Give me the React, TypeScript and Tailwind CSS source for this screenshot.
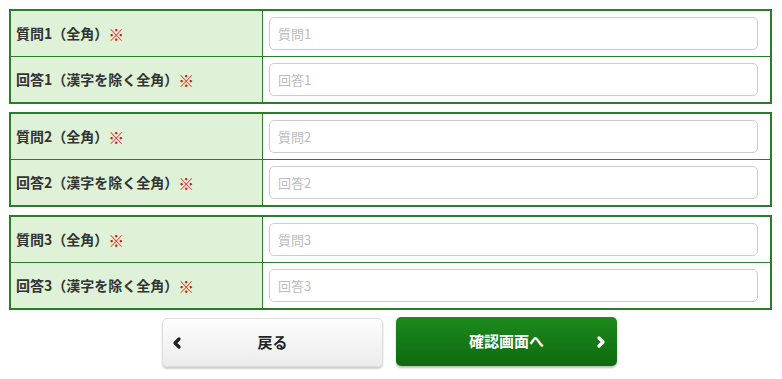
import { ChevronLeft, ChevronRight } from "lucide-react";

const GROUPS = [1, 2, 3];

function Row({ label, placeholder, last }: { label: string; placeholder: string; last?: boolean }) {
  return (
    <div className={`grid grid-cols-[252px_1fr] ${last ? "" : "border-b border-[#2a7d2a]"}`}>
      <div className="flex items-center border-r border-[#2a7d2a] bg-[#dff2d8] pl-[5px] text-[14px] font-bold text-[#333]">
        {label}
        <span className="text-[16px] leading-none text-[#d11]">※</span>
      </div>
      <div className="flex items-center bg-white py-[6px] pl-[6px] pr-[12px]">
        <input
          type="text"
          placeholder={placeholder}
          className="h-[33px] w-full rounded-[5px] border border-[#ccc] px-[8px] text-[13px] text-[#333] outline-none placeholder:text-[#bbb]"
        />
      </div>
    </div>
  );
}

export default function App() {
  return (
    <div className="bg-white pt-[9px] font-['Noto_Sans_CJK_JP','Noto_Sans',sans-serif]" style={{ width: 782, height: 379 }}>
      <div className="mx-[9px] flex w-[763px] flex-col gap-[8px]">
        {GROUPS.map((n) => (
          <div key={n} className="border-2 border-[#2a7d2a]">
            <Row label={`質問${n}（全角）`} placeholder={`質問${n}`} />
            <Row label={`回答${n}（漢字を除く全角）`} placeholder={`回答${n}`} last />
          </div>
        ))}
      </div>
      <div className="mt-[7px] flex justify-center gap-[13px] pr-[3px]">
        <button
          type="button"
          className="relative mt-[1px] flex h-[49px] w-[221px] items-center justify-center rounded-[5px] border border-[#ddd] bg-gradient-to-b from-[#fdfdfd] to-[#ececec] text-[15px] font-bold text-[#222] shadow-[0_2px_2px_rgba(0,0,0,0.2)]"
        >
          <ChevronLeft className="absolute left-[6px] size-[16px]" strokeWidth={5} />
          戻る
        </button>
        <button
          type="button"
          className="relative flex h-[49px] w-[221px] items-center justify-center rounded-[5px] bg-gradient-to-b from-[#1d8a1d] to-[#0e6a0e] text-[15px] font-bold text-white shadow-[0_2px_2px_rgba(0,0,0,0.25)]"
        >
          確認画面へ
          <ChevronRight className="absolute right-[8px] size-[16px]" strokeWidth={5} />
        </button>
      </div>
    </div>
  );
}
